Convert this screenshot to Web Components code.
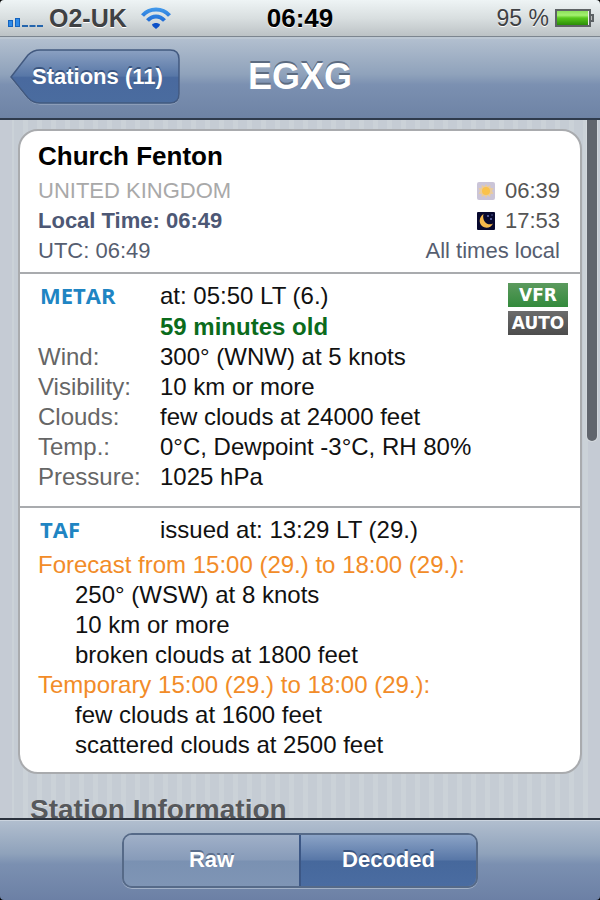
<!DOCTYPE html>
<html lang="en">
<head>
<meta charset="utf-8">
<meta name="viewport" content="width=device-width, initial-scale=1">
<title>EGXG</title>
<style>
    html {
        background: #000; }
    body {
        margin: 0;
        height: 100vh;
        display: flex;
        flex-direction: column;
        overflow: hidden;
        border-radius: 4px;
        font-family: "Liberation Sans", Arial, sans-serif;
        color: #111; }
    .age {
        padding-top: 1px;
        font-weight: bold;
        color: #0b6b1c; }
    .taf {
        padding-bottom: 12px; }
    .taf > [slot="issued"] {
        padding-bottom: 5px; }
    .next-title {
        margin: 20px 12px 0;
        font-size: 28px;
        line-height: 32px;
        color: #57595c;
        text-shadow: 0 1px 0 #e4e8ec; }
</style>
</head>
<body>

<template id="status-bar-template">
    <style>
        :host {
            display: grid;
            grid-template-columns: 1fr auto 1fr;
            align-items: center;
            height: 36px;
            padding: 0 6px;
            border-bottom: 1px solid #7c858f;
            background: linear-gradient(#eef4f5, #d9dfe0 50%, #bcc2c5);
            font-size: 23px;
            color: #3f4144;
            text-shadow: 0 1px 0 #fff; }
        .left, .right {
            display: flex;
            align-items: center; }
        .left {
            gap: 6px;
            font-size: 25px;
            font-weight: bold; }
        .wifi {
            margin-left: 7px; }
        .right {
            justify-content: flex-end;
            gap: 6px; }
        .time {
            font-size: 26px;
            font-weight: bold;
            color: #000; }
    </style>
    <div class="left">
        <svg width="37" height="18" viewBox="0 0 37 18" aria-hidden="true">
            <g fill="#2f8be8" stroke="#1563bd">
                <rect x="2.500" y="11.500" width="4" height="6"/>
                <rect x="9.500" y="9.500" width="4" height="8"/>
            </g>
            <path d="M16 17h6M23.500 17h6M31 17h6" stroke="#2465ad" stroke-width="2"/>
        </svg>
        <slot name="carrier"></slot>
        <svg class="wifi" width="32" height="24" viewBox="0 0 32 24" aria-hidden="true">
            <defs>
                <linearGradient id="wave" x1="0" y1="0" x2="0" y2="24" gradientUnits="userSpaceOnUse">
                    <stop offset="0" stop-color="#47a0ee"/>
                    <stop offset="1" stop-color="#0b50c8"/>
                </linearGradient>
            </defs>
            <g fill="none" stroke="url(#wave)" stroke-width="4">
                <path d="M2.500 9.500C9.500 1.500 22.500 1.500 29.500 9.500"/>
                <path d="M7.500 14.500C12.500 9 19.500 9 24.500 14.500"/>
            </g>
            <path d="M12 18.500C14 16.500 18 16.500 20 18.500Q20 20 16 23Q12 20 12 18.500Z" fill="#0b50c8"/>
        </svg>
    </div>
    <div class="time"><slot name="time"></slot></div>
    <div class="right">
        <slot name="battery"></slot>
        <svg width="39" height="18" viewBox="0 0 39 18" aria-hidden="true">
            <defs>
                <linearGradient id="charge" x1="0" y1="0" x2="0" y2="1">
                    <stop offset="0" stop-color="#8be05a"/>
                    <stop offset=".3" stop-color="#a4f070"/>
                    <stop offset=".5" stop-color="#58c81c"/>
                    <stop offset="1" stop-color="#2b8d08"/>
                </linearGradient>
            </defs>
            <rect x="1" y="1" width="34" height="16" fill="#eee" stroke="#5d6265" stroke-width="2"/>
            <rect x="2" y="2" width="31" height="14" fill="url(#charge)"/>
            <rect x="35" y="6" width="3" height="6" fill="#bbb" stroke="#5d6265" stroke-width="2"/>
        </svg>
    </div>
</template>

<template id="nav-bar-template">
    <style>
        :host {
            display: grid;
            grid-template-columns: 1fr auto 1fr;
            align-items: center;
            height: 79px;
            padding: 0 10px;
            border-top: 2px solid #bcc7d3;
            border-bottom: 2px solid #2f3b4d;
            background: linear-gradient(#b2bfcf, #8fa2bb 45%, #7b90b1 58%, #6e83a5); }
        h1 {
            margin: 0;
            padding-bottom: 4px;
            font-size: 36px;
            line-height: 40px;
            color: #fff;
            text-shadow: 0 -2px 0 #5c6b80; }
    </style>
    <slot name="back"></slot>
    <h1><slot></slot></h1>
</template>

<template id="back-button-template">
    <style>
        :host {
            display: block; }
        button {
            display: inline-grid;
            align-items: center;
            padding: 0;
            border: 0;
            background: none;
            font: bold 22px/26px "Liberation Sans", Arial, sans-serif;
            color: #fff;
            text-shadow: 0 -2px 0 #3a5580; }
        svg, span {
            grid-area: 1 / 1; }
        svg {
            display: block; }
        span {
            padding-left: 22px;
            text-align: left; }
    </style>
    <button type="button">
        <svg width="170" height="56" viewBox="0 0 170 56" aria-hidden="true">
            <defs>
                <linearGradient id="glass" x1="0" y1="0" x2="0" y2="1">
                    <stop offset="0" stop-color="#8ba1c2"/>
                    <stop offset=".49" stop-color="#5877a7"/>
                    <stop offset=".52" stop-color="#49699e"/>
                    <stop offset="1" stop-color="#4a6c9f"/>
                </linearGradient>
            </defs>
            <path d="M1 29L18 7Q23 2 30 2H160Q169 2 169 11V46Q169 55 160 55H30Q23 55 18 50Z" fill="none" stroke="#a3b2c8" stroke-width="1"/>
            <path d="M1 28L18 6Q23 1 30 1H160Q169 1 169 10V45Q169 54 160 54H30Q23 54 18 49Z" fill="url(#glass)" stroke="#42597f" stroke-width="1.500"/>
        </svg>
        <span><slot></slot></span>
    </button>
</template>

<template id="page-view-template">
    <style>
        :host {
            display: block;
            position: relative;
            flex: 1;
            min-height: 0;
            overflow: hidden;
            padding: 9px 18px 0;
            background:
                linear-gradient(90deg, #c5cbd4 12px, transparent 12px calc(100% - 12px), #c5cbd4 calc(100% - 12px)),
                repeating-linear-gradient(90deg, #c5ccd4 0 9px, #cbd2d8 9px 14px); }
        .scrollbar {
            position: absolute;
            top: 0;
            right: 3px;
            width: 10px;
            height: 46%;
            border-radius: 0 0 5px 5px;
            box-shadow: 0 0 0 1px #d3d8dd;
            background: #60656d; }
    </style>
    <slot></slot>
    <div class="scrollbar"></div>
</template>

<template id="info-card-template">
    <style>
        :host {
            display: block;
            overflow: hidden;
            border: 2px solid #a9abae;
            border-radius: 20px;
            background: #fff; }
        ::slotted(:not(:first-child)) {
            border-top: 2px solid #a9abae; }
    </style>
    <slot></slot>
</template>

<template id="station-head-template">
    <style>
        :host {
            display: flex;
            justify-content: space-between;
            align-items: flex-end;
            padding: 8px 20px 6px 18px;
            font-size: 22px;
            line-height: 30px;
            color: #565e70; }
        h2 {
            margin: 0 0 3px;
            font-size: 26px;
            line-height: 34px;
            color: #000; }
        .country {
            color: #a9a9a9; }
        .local {
            font-weight: bold;
            color: #4d5875; }
        .sun {
            text-align: right; }
        .sun div {
            display: flex;
            align-items: center;
            justify-content: flex-end;
            gap: 10px;
            color: #555; }
    </style>
    <div>
        <h2><slot name="name"></slot></h2>
        <div class="country"><slot name="country"></slot></div>
        <div class="local"><slot name="local"></slot></div>
        <slot name="utc"></slot>
    </div>
    <div class="sun">
        <div>
            <svg width="18" height="18" viewBox="0 0 18 18" role="img" aria-label="Sunrise">
                <rect width="18" height="18" rx="2" fill="#cbc5d8"/>
                <path d="M9 2l1.500 2.500 2.700-1.500.3 3 3 .3-1.500 2.700 1.500 2.700-3 .3-.3 3-2.700-1.500L9 16l-1.500-2.500-2.700 1.500-.3-3-3-.3L3 9 1.500 6.300l3-.3.3-3 2.700 1.500z" fill="#eacb9c"/>
                <circle cx="9" cy="9" r="4" fill="#fac24b"/>
            </svg>
            <slot name="sunrise"></slot>
        </div>
        <div>
            <svg width="18" height="18" viewBox="0 0 18 18" role="img" aria-label="Sunset">
                <rect width="18" height="18" rx="1" fill="#07082e"/>
                <path d="M6.500 2C2 5 1.500 11 5 14c3.500 3 9 2 11-2.500-3 1.500-6 1-8-1.500-1.800-2.300-2.300-5.500-1.500-8z" fill="#f5b84c"/>
                <g fill="#6c76b8">
                    <circle cx="11" cy="4" r="1"/>
                    <circle cx="14" cy="7" r="1"/>
                    <circle cx="15" cy="3" r=".7"/>
                </g>
            </svg>
            <slot name="sunset"></slot>
        </div>
        <slot name="note"></slot>
    </div>
</template>

<template id="report-section-template">
    <style>
        :host {
            display: block;
            padding: 7px 12px 14px 18px;
            font-size: 24px;
            line-height: 30px; }
        header {
            display: grid;
            grid-template-columns: 122px 1fr auto;
            align-items: start; }
        h3 {
            margin: 0;
            padding-left: 2px;
            font: bold 22px/28px "Open Sans", "Noto Sans", sans-serif;
            color: #1f85c3; }
        .badges {
            display: grid;
            gap: 4px;
            padding-top: 2px; }
    </style>
    <header>
        <h3></h3>
        <div><slot name="issued"></slot></div>
        <div class="badges"><slot name="badge"></slot></div>
    </header>
    <slot></slot>
</template>

<template id="flag-badge-template">
    <style>
        :host {
            display: block;
            width: 60px;
            box-sizing: border-box;
            background: linear-gradient(#6c6c6c, #4c4c4c);
            font: bold 17px/24px "DejaVu Sans", Verdana, sans-serif;
            text-align: center;
            color: #fff; }
        :host([color="green"]) {
            background: linear-gradient(#5c9a5e, #338a3c); }
    </style>
    <slot></slot>
</template>

<template id="report-row-template">
    <style>
        :host {
            display: grid;
            grid-template-columns: 122px 1fr; }
        .label {
            color: #666; }
    </style>
    <span class="label"></span>
    <span><slot></slot></span>
</template>

<template id="forecast-group-template">
    <style>
        :host {
            display: block; }
        .period {
            color: #f28c28; }
        .lines {
            padding-left: 37px; }
    </style>
    <div class="period"></div>
    <div class="lines"><slot></slot></div>
</template>

<template id="tool-bar-template">
    <style>
        :host {
            display: flex;
            justify-content: center;
            align-items: center;
            height: 80px;
            border-top: 2px solid #2b323d;
            box-shadow: inset 0 1px 0 #cbd4df;
            background: linear-gradient(#b2bfcf, #8fa2bb 42%, #7b90b1 55%, #6c80a5); }
    </style>
    <slot></slot>
</template>

<template id="segmented-control-template">
    <style>
        :host {
            display: flex;
            width: 60%;
            max-width: 356px;
            box-sizing: border-box;
            overflow: hidden;
            border: 2px solid #566a88;
            border-radius: 10px;
            box-shadow: 0 1px 0 #a3b2c8; }
        ::slotted(button) {
            flex: 1;
            height: 51px;
            padding: 0;
            border: 0;
            background: linear-gradient(#a0b0c8, #879bb9 49%, #7a91b2 51%, #7f95b5);
            font: bold 22px/26px "Liberation Sans", Arial, sans-serif;
            color: #fff;
            text-shadow: 0 -2px 0 #5b6e8c; }
        ::slotted(button[aria-pressed="true"]) {
            border-left: 2px solid #3c5785;
            background: linear-gradient(#8ba3c6, #5877a7 49%, #46689c 51%, #4a6ca1);
            text-shadow: 0 -2px 0 #3a5580; }
    </style>
    <slot></slot>
</template>

<status-bar>
    <span slot="carrier">O2-UK</span>
    <span slot="time">06:49</span>
    <span slot="battery">95 %</span>
</status-bar>
<nav-bar>
    <back-button slot="back">Stations (11)</back-button>
    EGXG
</nav-bar>
<page-view>
    <info-card>
        <station-head>
            <span slot="name">Church Fenton</span>
            <span slot="country">UNITED KINGDOM</span>
            <span slot="local">Local Time: 06:49</span>
            <span slot="utc">UTC: 06:49</span>
            <span slot="sunrise">06:39</span>
            <span slot="sunset">17:53</span>
            <span slot="note">All times local</span>
        </station-head>
        <report-section data-title="METAR">
            <div slot="issued">at: 05:50 LT (6.)</div>
            <div slot="issued" class="age">59 minutes old</div>
            <flag-badge slot="badge" color="green">VFR</flag-badge>
            <flag-badge slot="badge">AUTO</flag-badge>
            <report-row data-label="Wind:">300° (WNW) at 5 knots</report-row>
            <report-row data-label="Visibility:">10 km or more</report-row>
            <report-row data-label="Clouds:">few clouds at 24000 feet</report-row>
            <report-row data-label="Temp.:">0°C, Dewpoint -3°C, RH 80%</report-row>
            <report-row data-label="Pressure:">1025 hPa</report-row>
        </report-section>
        <report-section data-title="TAF" class="taf">
            <div slot="issued">issued at: 13:29 LT (29.)</div>
            <forecast-group data-period="Forecast from 15:00 (29.) to 18:00 (29.):">
                <div>250° (WSW) at 8 knots</div>
                <div>10 km or more</div>
                <div>broken clouds at 1800 feet</div>
            </forecast-group>
            <forecast-group data-period="Temporary 15:00 (29.) to 18:00 (29.):">
                <div>few clouds at 1600 feet</div>
                <div>scattered clouds at 2500 feet</div>
            </forecast-group>
        </report-section>
    </info-card>
    <h2 class="next-title">Station Information</h2>
</page-view>
<tool-bar>
    <segmented-control>
        <button type="button" aria-pressed="false">Raw</button>
        <button type="button" aria-pressed="true">Decoded</button>
    </segmented-control>
</tool-bar>

<script>
    class TemplateElement extends HTMLElement {
        constructor() {
            super();
            let template = document.getElementById(this.localName + '-template');
            this.attachShadow({mode: 'open'});
            this.shadowRoot.appendChild(document.importNode(template.content, true));
        }
    }

    class ReportSection extends TemplateElement {
        connectedCallback() {
            this.shadowRoot.querySelector('h3').textContent = this.dataset.title;
        }
    }

    class ReportRow extends TemplateElement {
        connectedCallback() {
            this.shadowRoot.querySelector('.label').textContent = this.dataset.label;
        }
    }

    class ForecastGroup extends TemplateElement {
        connectedCallback() {
            this.shadowRoot.querySelector('.period').textContent = this.dataset.period;
        }
    }

    class SegmentedControl extends TemplateElement {
        connectedCallback() {
            this.addEventListener('click', e => {
                let button = e.target.closest('button');
                if (!button) return;
                this.querySelectorAll('button').forEach(b => {
                    b.setAttribute('aria-pressed', b === button);
                });
            });
        }
    }

    ['status-bar', 'nav-bar', 'back-button', 'page-view', 'info-card',
        'station-head', 'flag-badge', 'tool-bar'].forEach(name => {
        customElements.define(name, class extends TemplateElement {});
    });
    customElements.define('report-section', ReportSection);
    customElements.define('report-row', ReportRow);
    customElements.define('forecast-group', ForecastGroup);
    customElements.define('segmented-control', SegmentedControl);
</script>
</body>
</html>
